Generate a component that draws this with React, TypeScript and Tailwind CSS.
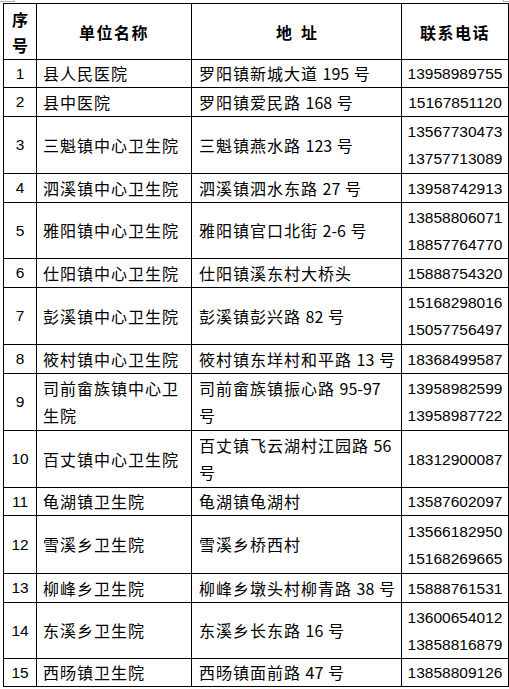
import React from "react";

type Row = { n: string; name: string[]; addr: string[]; phones: string[]; h: number };

const rows: Row[] = [
  { n: "1", name: ["县人民医院"], addr: ["罗阳镇新城大道 195 号"], phones: ["13958989755"], h: 28 },
  { n: "2", name: ["县中医院"], addr: ["罗阳镇爱民路 168 号"], phones: ["15167851120"], h: 29 },
  { n: "3", name: ["三魁镇中心卫生院"], addr: ["三魁镇燕水路 123 号"], phones: ["13567730473", "13757713089"], h: 57 },
  { n: "4", name: ["泗溪镇中心卫生院"], addr: ["泗溪镇泗水东路 27 号"], phones: ["13958742913"], h: 29 },
  { n: "5", name: ["雅阳镇中心卫生院"], addr: ["雅阳镇官口北街 2-6 号"], phones: ["13858806071", "18857764770"], h: 56 },
  { n: "6", name: ["仕阳镇中心卫生院"], addr: ["仕阳镇溪东村大桥头"], phones: ["15888754320"], h: 29 },
  { n: "7", name: ["彭溪镇中心卫生院"], addr: ["彭溪镇彭兴路 82 号"], phones: ["15168298016", "15057756497"], h: 57 },
  { n: "8", name: ["筱村镇中心卫生院"], addr: ["筱村镇东垟村和平路 13 号"], phones: ["18368499587"], h: 29 },
  { n: "9", name: ["司前畲族镇中心卫", "生院"], addr: ["司前畲族镇振心路 95-97", "号"], phones: ["13958982599", "13958987722"], h: 57 },
  { n: "10", name: ["百丈镇中心卫生院"], addr: ["百丈镇飞云湖村江园路 56", "号"], phones: ["18312900087"], h: 57 },
  { n: "11", name: ["龟湖镇卫生院"], addr: ["龟湖镇龟湖村"], phones: ["13587602097"], h: 28 },
  { n: "12", name: ["雪溪乡卫生院"], addr: ["雪溪乡桥西村"], phones: ["13566182950", "15168269665"], h: 58 },
  { n: "13", name: ["柳峰乡卫生院"], addr: ["柳峰乡墩头村柳青路 38 号"], phones: ["15888761531"], h: 29 },
  { n: "14", name: ["东溪乡卫生院"], addr: ["东溪乡长东路 16 号"], phones: ["13600654012", "13858816879"], h: 56 },
  { n: "15", name: ["西旸镇卫生院"], addr: ["西旸镇面前路 47 号"], phones: ["13858809126"], h: 28 },
];

function Mixed({ text }: { text: string }) {
  const parts = text.split(/([0-9-]+)/);
  return (
    <>
      {parts.map((p, i) =>
        /^[0-9-]+$/.test(p) ? (
          <span key={i} className="tracking-normal">
            {p}
          </span>
        ) : (
          <span key={i}>{p}</span>
        )
      )}
    </>
  );
}

const cjk = "font-['Noto_Sans_CJK_SC',sans-serif]";
const num = "font-['Liberation_Sans',Arial,sans-serif]";

export default function App() {
  return (
    <div className="relative w-[509px] h-[689px] bg-white pl-[3px] pt-[3px] text-black">
      <div className="absolute left-0 top-[1px] w-[14px] h-px bg-[#b0b0b0]" />
      <div className="absolute left-[14px] top-0 w-px h-[2px] bg-[#b0b0b0]" />
      <div className="absolute left-[503px] top-0 w-px h-[2px] bg-[#b0b0b0]" />
      <div className="absolute left-[503px] top-[1px] w-[6px] h-px bg-[#b0b0b0]" />
      <table className="table-fixed border-collapse w-[505px]">
        <colgroup>
          <col className="w-[33px]" />
          <col className="w-[155px]" />
          <col className="w-[210px]" />
          <col className="w-[107px]" />
        </colgroup>
        <thead>
          <tr className="h-[56px]">
            <th className={`border border-black p-0 text-[16px] font-bold leading-[26px] ${cjk}`}>
              序<br />号
            </th>
            <th className={`border border-black p-0 text-[16px] font-bold tracking-[1.5px] ${cjk}`}>单位名称</th>
            <th className={`border border-black p-0 text-[16px] font-bold ${cjk}`}>
              地<span className="inline-block w-[9px]" />址
            </th>
            <th className={`border border-black p-0 text-[16px] font-bold tracking-[1.5px] ${cjk}`}>联系电话</th>
          </tr>
        </thead>
        <tbody>
          {rows.map((r) => (
            <tr key={r.n} style={{ height: r.h }}>
              <td className={`border border-black p-0 text-center text-[15.5px] leading-[20px] ${num}`}>{r.n}</td>
              <td className={`border border-black p-0 pl-[6px] text-[16px] tracking-[1px] leading-[27px] whitespace-nowrap ${cjk}`}>
                {r.name.map((l, i) => (
                  <div key={i}>{l}</div>
                ))}
              </td>
              <td className={`border border-black p-0 pl-[7px] text-[16px] tracking-[1px] leading-[27px] whitespace-nowrap ${cjk}`}>
                {r.addr.map((l, i) => (
                  <div key={i}>
                    <Mixed text={l} />
                  </div>
                ))}
              </td>
              <td className={`border border-black p-0 text-center text-[15.5px] leading-[27px] ${num}`}>
                {r.phones.map((p) => (
                  <div key={p}>{p}</div>
                ))}
              </td>
            </tr>
          ))}
        </tbody>
      </table>
    </div>
  );
}
